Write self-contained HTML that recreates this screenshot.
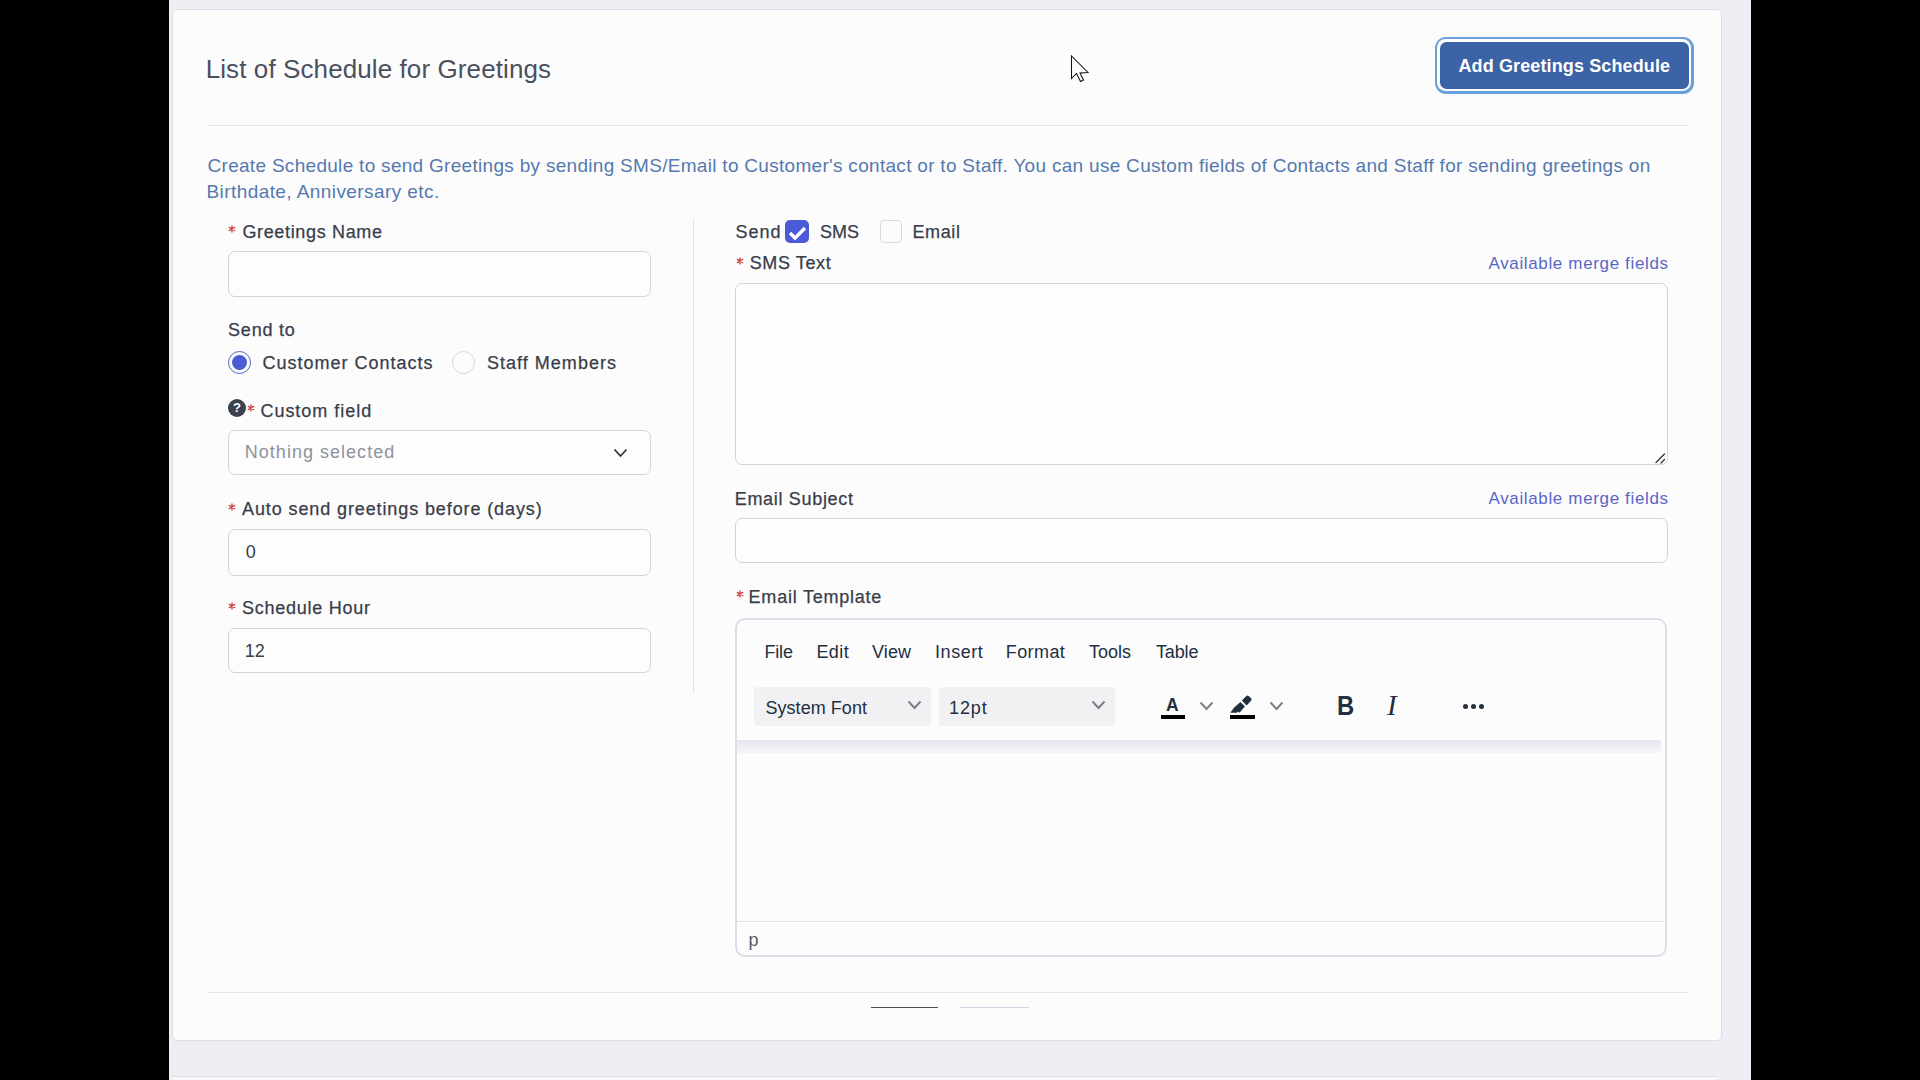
<!DOCTYPE html>
<html><head><meta charset="utf-8">
<style>
html,body{margin:0;padding:0;}
body{width:1920px;height:1080px;background:#000;position:relative;overflow:hidden;font-family:"Liberation Sans",sans-serif;}
.abs{position:absolute;}
.t{position:absolute;white-space:nowrap;line-height:1;}
.lab{-webkit-text-stroke:0.25px currentColor;}
#page{left:169px;top:0;width:1582px;height:1080px;background:#eeeff5;}
#card{left:172px;top:9px;width:1548px;height:1030px;background:#fcfcfd;border:1px solid #dcdde6;border-radius:5px;}
.hr{position:absolute;height:1px;background:#e2e3ea;}
.inp{position:absolute;box-sizing:border-box;border:1.5px solid #d2d4dc;border-radius:7px;background:#fdfdfe;}
svg{position:absolute;overflow:visible;}
</style></head>
<body>
<div id="page" class="abs"></div>
<div class="abs" style="left:172px;top:1076px;width:1545px;height:1px;background:#d9dae4;"></div>
<div class="abs" style="left:172px;top:1077px;width:1545px;height:3px;background:#f6f7f9;"></div>
<div id="card" class="abs"></div>

<!-- header button -->
<div class="abs" style="left:1434.5px;top:36.5px;width:259px;height:57px;border-radius:11px;background:#68a0dc;"></div>
<div class="abs" style="left:1437.3px;top:39.3px;width:253.4px;height:51.4px;border-radius:8.5px;background:#fcfcfd;"></div>
<div class="abs" style="left:1439.5px;top:41.5px;width:249.5px;height:47.5px;border-radius:6.5px;background:#3b63a5;"></div>
<div class="hr" style="left:207px;top:125px;width:1481px;"></div>

<!-- asterisks -->
<svg width="10" height="10" style="left:232px;top:229px"><path d="M0,-3.1V3.1M-2.7,-1.55L2.7,1.55M-2.7,1.55L2.7,-1.55" stroke="#d04848" stroke-width="1.4" stroke-linecap="round"/></svg>
<svg width="10" height="10" style="left:250.5px;top:408px"><path d="M0,-3.1V3.1M-2.7,-1.55L2.7,1.55M-2.7,1.55L2.7,-1.55" stroke="#d04848" stroke-width="1.4" stroke-linecap="round"/></svg>
<svg width="10" height="10" style="left:232px;top:506.6px"><path d="M0,-3.1V3.1M-2.7,-1.55L2.7,1.55M-2.7,1.55L2.7,-1.55" stroke="#d04848" stroke-width="1.4" stroke-linecap="round"/></svg>
<svg width="10" height="10" style="left:232px;top:605.5px"><path d="M0,-3.1V3.1M-2.7,-1.55L2.7,1.55M-2.7,1.55L2.7,-1.55" stroke="#d04848" stroke-width="1.4" stroke-linecap="round"/></svg>
<svg width="10" height="10" style="left:740px;top:260.5px"><path d="M0,-3.1V3.1M-2.7,-1.55L2.7,1.55M-2.7,1.55L2.7,-1.55" stroke="#d04848" stroke-width="1.4" stroke-linecap="round"/></svg>
<svg width="10" height="10" style="left:739.7px;top:594.1px"><path d="M0,-3.1V3.1M-2.7,-1.55L2.7,1.55M-2.7,1.55L2.7,-1.55" stroke="#d04848" stroke-width="1.4" stroke-linecap="round"/></svg>

<!-- left column inputs -->
<div class="inp" style="left:228px;top:251px;width:423px;height:46px;"></div>
<!-- radios -->
<div class="abs" style="left:228px;top:350.5px;width:23px;height:23px;box-sizing:border-box;border-radius:50%;border:1.7px solid #5862c0;"></div>
<div class="abs" style="left:232px;top:354.5px;width:15px;height:15px;border-radius:50%;background:#4b5bd6;"></div>
<div class="abs" style="left:452px;top:350.5px;width:23px;height:23px;box-sizing:border-box;border-radius:50%;border:1.5px solid #d6d8e4;"></div>
<!-- ? icon -->
<div class="abs" style="left:228px;top:398.5px;width:18px;height:18px;border-radius:50%;background:#3b414d;"></div>
<div class="t" style="left:233px;top:401px;font-size:13px;font-weight:bold;color:#fff;">?</div>
<div class="inp" style="left:228px;top:430px;width:423px;height:45px;"></div>
<svg width="16" height="10" style="left:613px;top:448px"><path d="M1.5,1.5L7.5,8L13.5,1.5" fill="none" stroke="#2f3540" stroke-width="1.8"/></svg>
<div class="inp" style="left:228px;top:529px;width:423px;height:46.5px;"></div>
<div class="inp" style="left:228px;top:627.5px;width:423px;height:45px;"></div>
<!-- vertical divider -->
<div class="abs" style="left:692.5px;top:218px;width:1px;height:475px;background:#e2e3ea;"></div>

<!-- checkboxes -->
<div class="abs" style="left:785px;top:220px;width:23.5px;height:23px;border-radius:5px;background:#4a5ad8;"></div>
<svg width="24" height="24" style="left:785px;top:220px"><path d="M5,13L10,18L20,8" fill="none" stroke="#fff" stroke-width="3.4"/></svg>
<div class="abs" style="left:879.5px;top:220px;width:22px;height:23px;box-sizing:border-box;border-radius:4px;border:1.5px solid #d8dae6;"></div>

<!-- SMS textarea -->
<div class="inp" style="left:735px;top:283px;width:932.5px;height:181.5px;"></div>
<svg width="14" height="14" style="left:1654px;top:452px"><path d="M2,10.5L10.5,2M7,11L10.5,7.5" fill="none" stroke="#333" stroke-width="1.3" stroke-linecap="round"/></svg>
<!-- email subject -->
<div class="inp" style="left:735px;top:518px;width:932.5px;height:45px;"></div>

<!-- editor -->
<div class="abs" style="left:735px;top:617.5px;width:932px;height:339px;box-sizing:border-box;border:2px solid #dcdde6;border-radius:10px;"></div>
<div class="abs" style="left:754px;top:687px;width:177px;height:39px;border-radius:3px;background:#f1f1f4;"></div>
<div class="abs" style="left:938.5px;top:687px;width:176px;height:39px;border-radius:3px;background:#f1f1f4;"></div>
<svg width="16" height="10" style="left:907px;top:700px"><path d="M1.5,1.5L7.5,8L13.5,1.5" fill="none" stroke="#7d8088" stroke-width="2"/></svg>
<svg width="16" height="10" style="left:1091px;top:700px"><path d="M1.5,1.5L7.5,8L13.5,1.5" fill="none" stroke="#7d8088" stroke-width="2"/></svg>
<!-- text color A -->
<div class="t" style="left:1166px;top:697px;font-size:17.5px;font-weight:bold;color:#222f3e;">A</div>
<div class="abs" style="left:1160.5px;top:714.5px;width:24.5px;height:4.5px;background:#000;"></div>
<svg width="16" height="10" style="left:1199px;top:701px"><path d="M1.5,1.5L7.5,8L13.5,1.5" fill="none" stroke="#7d8088" stroke-width="2"/></svg>
<!-- highlighter -->
<svg width="26" height="20" style="left:1230px;top:695px"><path d="M0.2,17.8L4.2,12.5L10.4,6.9L14.9,11.4L9.5,17.8L7.8,16.6L6.9,17.8Z" fill="#222f3e"/><path d="M11.9,5.4L16.3,1Q17.5,0 18.7,1L21,3.3Q22,4.6 21,5.8L16.6,10.4Z" fill="#222f3e"/></svg>
<div class="abs" style="left:1230px;top:714.5px;width:25px;height:4.5px;background:#000;"></div>
<svg width="16" height="10" style="left:1269px;top:701px"><path d="M1.5,1.5L7.5,8L13.5,1.5" fill="none" stroke="#7d8088" stroke-width="2"/></svg>
<!-- B I -->
<div class="t" style="left:1336.5px;top:692.5px;font-size:27px;font-weight:bold;color:#222f3e;transform:scaleX(0.88);transform-origin:0 0;">B</div>
<div class="t" style="left:1387px;top:691px;font-size:29px;font-style:italic;font-family:'Liberation Serif',serif;color:#222f3e;">I</div>
<!-- more -->
<div class="abs" style="left:1462.7px;top:703.8px;width:5.6px;height:5.6px;border-radius:50%;background:#222f3e;"></div>
<div class="abs" style="left:1470.7px;top:703.8px;width:5.6px;height:5.6px;border-radius:50%;background:#222f3e;"></div>
<div class="abs" style="left:1478.7px;top:703.8px;width:5.6px;height:5.6px;border-radius:50%;background:#222f3e;"></div>
<!-- toolbar shadow -->
<div class="abs" style="left:737px;top:739.5px;width:924px;height:13px;background:linear-gradient(#e4e5ee,#eeeff5 50%,#f5f5f9);"></div>
<!-- status bar -->
<div class="abs" style="left:737px;top:921px;width:928px;height:1px;background:#dfe0e8;"></div>

<!-- footer -->
<div class="hr" style="left:208px;top:992px;width:1480px;"></div>
<div class="abs" style="left:871px;top:1007px;width:67px;height:1px;background:#4a4f5a;"></div>
<div class="abs" style="left:960px;top:1007px;width:69px;height:1px;background:#d4d6e6;"></div>

<div class="t" style="left:205.70px;top:55.99px;font-size:26px;color:#4b505d;letter-spacing:0.096px;">List of Schedule for Greetings</div>
<div class="t" style="left:1458.50px;top:56.76px;font-size:18px;color:#ffffff;font-weight:bold;letter-spacing:0.118px;">Add Greetings Schedule</div>
<div class="t" style="left:207.50px;top:155.92px;font-size:19px;color:#5579ad;letter-spacing:0.297px;">Create Schedule to send Greetings by sending SMS/Email to Customer's contact or to Staff. You can use Custom fields of Contacts and Staff for sending greetings on</div>
<div class="t" style="left:206.50px;top:181.62px;font-size:19px;color:#5579ad;letter-spacing:0.421px;">Birthdate, Anniversary etc.</div>
<div class="t lab" style="left:242.40px;top:222.76px;font-size:18px;color:#383d49;letter-spacing:0.658px;">Greetings Name</div>
<div class="t lab" style="left:228.10px;top:321.36px;font-size:18px;color:#383d49;letter-spacing:0.768px;">Send to</div>
<div class="t lab" style="left:262.50px;top:353.76px;font-size:18px;color:#383d49;letter-spacing:0.997px;">Customer Contacts</div>
<div class="t lab" style="left:486.90px;top:353.56px;font-size:18px;color:#383d49;letter-spacing:1.033px;">Staff Members</div>
<div class="t lab" style="left:260.40px;top:401.66px;font-size:18px;color:#383d49;letter-spacing:0.989px;">Custom field</div>
<div class="t" style="left:244.80px;top:443.26px;font-size:18px;color:#8d929d;letter-spacing:1.022px;">Nothing selected</div>
<div class="t lab" style="left:242.00px;top:500.26px;font-size:18px;color:#383d49;letter-spacing:0.892px;">Auto send greetings before (days)</div>
<div class="t" style="left:245.70px;top:542.76px;font-size:18px;color:#383d49;">0</div>
<div class="t lab" style="left:242.00px;top:599.16px;font-size:18px;color:#383d49;letter-spacing:0.743px;">Schedule Hour</div>
<div class="t" style="left:244.70px;top:641.56px;font-size:18px;color:#383d49;">12</div>
<div class="t lab" style="left:735.60px;top:222.76px;font-size:18px;color:#383d49;letter-spacing:0.924px;">Send</div>
<div class="t lab" style="left:820.00px;top:222.76px;font-size:18px;color:#383d49;">SMS</div>
<div class="t lab" style="left:912.40px;top:222.76px;font-size:18px;color:#383d49;letter-spacing:0.648px;">Email</div>
<div class="t lab" style="left:749.70px;top:254.16px;font-size:18px;color:#383d49;letter-spacing:0.612px;">SMS Text</div>
<div class="t" style="left:1488.50px;top:255.01px;font-size:17px;color:#5a66c6;letter-spacing:0.643px;">Available merge fields</div>
<div class="t lab" style="left:734.70px;top:489.56px;font-size:18px;color:#383d49;letter-spacing:0.688px;">Email Subject</div>
<div class="t" style="left:1488.50px;top:490.21px;font-size:17px;color:#5a66c6;letter-spacing:0.643px;">Available merge fields</div>
<div class="t lab" style="left:748.60px;top:587.76px;font-size:18px;color:#383d49;letter-spacing:0.774px;">Email Template</div>
<div class="t" style="left:764.40px;top:642.76px;font-size:18px;color:#222f3e;letter-spacing:-0.131px;">File</div>
<div class="t" style="left:816.40px;top:642.76px;font-size:18px;color:#222f3e;letter-spacing:0.428px;">Edit</div>
<div class="t" style="left:872.00px;top:642.76px;font-size:18px;color:#222f3e;letter-spacing:0.103px;">View</div>
<div class="t" style="left:935.00px;top:642.76px;font-size:18px;color:#222f3e;letter-spacing:0.557px;">Insert</div>
<div class="t" style="left:1005.80px;top:642.76px;font-size:18px;color:#222f3e;letter-spacing:0.399px;">Format</div>
<div class="t" style="left:1089.00px;top:642.76px;font-size:18px;color:#222f3e;">Tools</div>
<div class="t" style="left:1156.00px;top:642.76px;font-size:18px;color:#222f3e;letter-spacing:-0.155px;">Table</div>
<div class="t" style="left:765.40px;top:698.76px;font-size:18px;color:#222f3e;letter-spacing:0.057px;">System Font</div>
<div class="t" style="left:949.00px;top:698.76px;font-size:18px;color:#222f3e;letter-spacing:0.889px;">12pt</div>
<div class="t" style="left:748.50px;top:930.76px;font-size:18px;color:#555b66;">p</div>

<!-- cursor -->
<svg width="20" height="30" style="left:1060px;top:50px"><path d="M11.5,6V28.5L16.5,23.5L20.5,31.5L23.5,30L20,23L28,22.5Z" fill="#fff" stroke="#111" stroke-width="1.05" stroke-linejoin="miter"/></svg>
</body></html>
